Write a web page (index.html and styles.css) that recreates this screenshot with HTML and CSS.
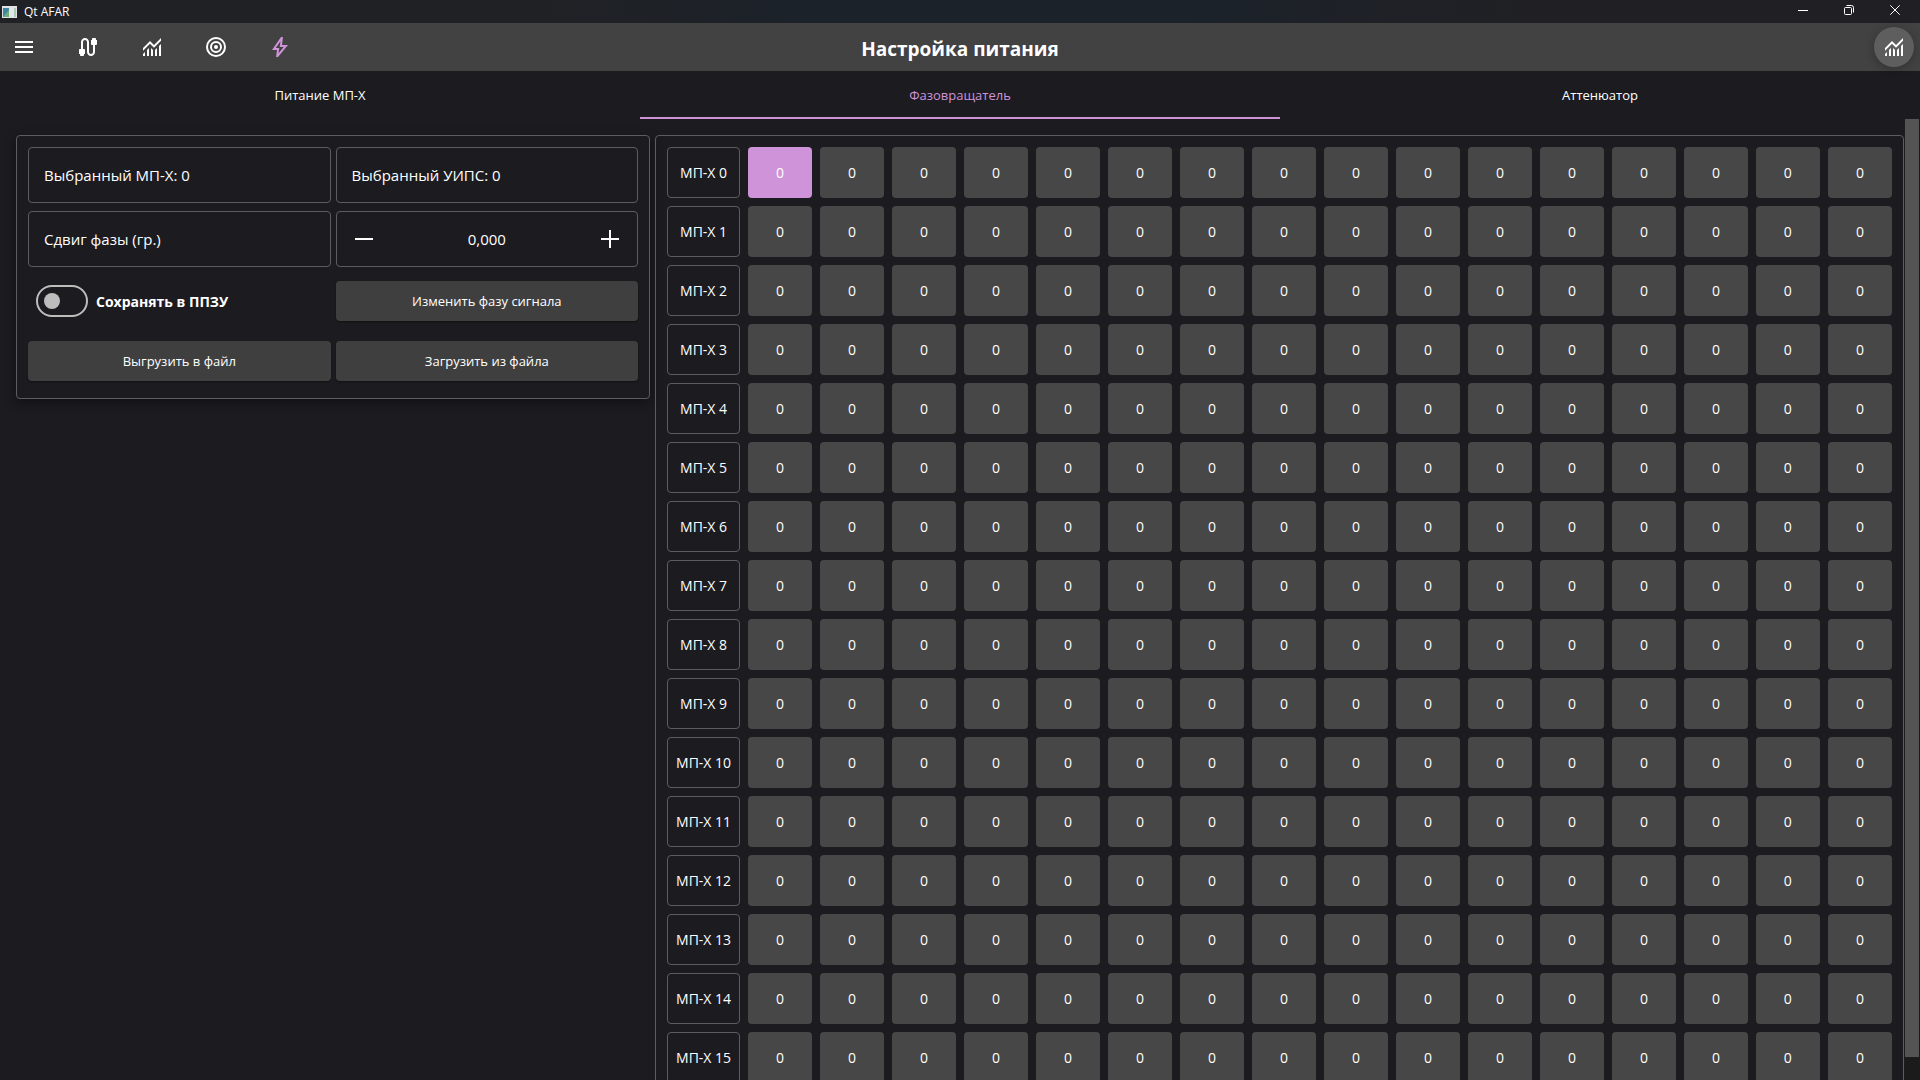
FILE: index.html
```html
<!DOCTYPE html>
<html lang="ru">
<head>
<meta charset="utf-8">
<title>Qt AFAR</title>
<link rel="stylesheet" href="styles.css">
</head>
<body>
<svg class="sprite" aria-hidden="true">
  <symbol id="i-chart" viewBox="0 -960 960 960"><path d="M120-120v-80l80-80v160h-80Zm160 0v-240l80-80v320h-80Zm160 0v-320l80 81v239h-80Zm160 0v-239l80-80v319h-80Zm160 0v-400l80-80v480h-80ZM120-327v-113l280-280 160 160 280-280v113L560-447 400-607 120-327Z"/></symbol>
</svg>
<header class="titlebar">
  <svg class="app-icon" viewBox="0 0 15 12" aria-hidden="true"><rect width="15" height="12" fill="#dfe3e6"/><rect x="1" y="2" width="6" height="9" fill="#3f86a0"/><path d="M1 11L7 4v7z" fill="#6fae7c"/><rect x="8" y="2" width="4" height="9" fill="#e4e6e8"/><rect x="12" y="2" width="2" height="9" fill="#a9cdb4"/></svg>
  <span class="app-name">Qt AFAR</span>
  <div class="window-controls">
    <button aria-label="Свернуть"><svg viewBox="0 0 10 10"><path d="M0 5.500h10"/></svg></button>
    <button aria-label="Восстановить"><svg viewBox="0 0 10 10"><rect x=".5" y="2.500" width="7" height="7" rx="1"/><path d="M2.500 .5h5q2 0 2 2v5"/></svg></button>
    <button aria-label="Закрыть"><svg viewBox="0 0 10 10"><path d="M.3 .3l9.400 9.400M9.700 .3L.3 9.700"/></svg></button>
  </div>
</header>
<div class="toolbar">
  <nav class="tools">
    <button class="tool" aria-label="Меню"><svg viewBox="0 0 24 24"><path d="M3 18h18v-2H3v2zm0-5h18v-2H3v2zm0-7v2h18V6H3z"/></svg></button>
    <button class="tool" aria-label="Подключение"><svg viewBox="0 0 24 24"><path d="M20 5V4c0-.55-.45-1-1-1h-2c-.55 0-1 .45-1 1v1h-1v4c0 .55.45 1 1 1h1v7c0 1.100-.9 2-2 2s-2-.9-2-2V7c0-2.210-1.790-4-4-4S5 4.790 5 7v7H4c-.55 0-1 .45-1 1v4h1v1c0 .55.45 1 1 1h2c.55 0 1-.45 1-1v-1h1v-4c0-.55-.45-1-1-1H7V7c0-1.100.9-2 2-2s2 .9 2 2v10c0 2.210 1.790 4 4 4s4-1.790 4-4v-7h1c.55 0 1-.45 1-1V5h-1z"/></svg></button>
    <button class="tool" aria-label="Графики"><svg><use href="#i-chart"/></svg></button>
    <button class="tool" aria-label="Цель"><svg viewBox="0 0 24 24"><g fill="none" stroke="currentColor" stroke-width="2"><circle cx="12" cy="12" r="9"/><circle cx="12" cy="12" r="5"/></g><circle cx="12" cy="12" r="2"/></svg></button>
    <button class="tool tool-active" aria-label="Питание"><svg viewBox="0 -960 960 960"><path d="m422-232 207-248H469l29-227-185 267h139l-30 208ZM320-80l40-280H160l360-520h80l-40 320h240L400-80h-80Z"/></svg></button>
  </nav>
  <h1>Настройка питания</h1>
  <button class="fab" aria-label="Показать графики"><svg><use href="#i-chart"/></svg></button>
</div>
<div class="tabs" role="tablist">
  <button role="tab">Питание МП-Х</button>
  <button role="tab" aria-selected="true">Фазовращатель</button>
  <button role="tab">Аттенюатор</button>
</div>
<div class="view">
  <main class="content">
    <section class="panel controls">
      <div class="field">Выбранный МП-Х: 0</div>
      <div class="field">Выбранный УИПС: 0</div>
      <label class="field" for="phase">Сдвиг фазы (гр.)</label>
      <div class="field spinner">
        <button aria-label="Уменьшить"><svg viewBox="0 0 18 18"><path d="M0 9h18"/></svg></button>
        <input id="phase" type="text" value="0,000">
        <button aria-label="Увеличить"><svg viewBox="0 0 18 18"><path d="M0 9h18M9 0v18"/></svg></button>
      </div>
      <label class="switch"><input type="checkbox"><span>Сохранять в ППЗУ</span></label>
      <button class="action">Изменить фазу сигнала</button>
      <button class="action">Выгрузить в файл</button>
      <button class="action">Загрузить из файла</button>
    </section>
    <section class="panel matrix">
      <table><tbody id="cells"></tbody></table>
    </section>
  </main>
  <div class="scroll-track"><div class="scroll-thumb"></div></div>
</div>
<script src="script.js"></script>
</body>
</html>
```
FILE: styles.css
```css
* { box-sizing: border-box; }

body {
  margin: 0;
  height: 100vh;
  display: flex;
  flex-direction: column;
  overflow: hidden;
  background: #1c1b1f;
  color: #fff;
  font: 14px/20px "Open Sans", "Noto Sans", sans-serif;
}

button, input {
  margin: 0;
  padding: 0;
  border: 0;
  background: none;
  color: inherit;
  font: inherit;
}

.sprite { display: none; }

.titlebar {
  flex: none;
  height: 23px;
  display: flex;
  align-items: center;
  padding: 0 2px;
  background: linear-gradient(90deg, #202124 25%, #1b222a 45%, #1b222a 60%, #202024 80%);
  font-size: 12px;
}
.app-icon { width: 15px; height: 12px; }
.app-name { margin-left: 7px; }
.window-controls { display: flex; align-self: flex-start; margin-left: auto; }
.window-controls button {
  width: 46px;
  height: 20px;
  display: grid;
  place-items: center;
}
.window-controls svg {
  width: 10px;
  height: 10px;
  fill: none;
  stroke: #fff;
}

.toolbar {
  flex: none;
  height: 48px;
  display: grid;
  grid-template-columns: 1fr auto 1fr;
  align-items: center;
  background: #424242;
}
.tools { display: flex; gap: 16px; }
.tool, .fab { display: grid; place-items: center; }
.tool { width: 48px; height: 48px; }
.tool svg, .fab svg { width: 24px; height: 24px; fill: currentColor; }
.tool-active { color: #ce93d8; }
.toolbar h1 { margin: 0; padding-top: 3px; font-size: 19px; line-height: 28px; }
.fab {
  justify-self: end;
  width: 40px;
  height: 40px;
  margin-right: 6px;
  border-radius: 50%;
  background: #5e5e5e;
  box-shadow: 0 2px 10px #00000044;
}

.tabs { flex: none; display: grid; grid-template-columns: repeat(3, 1fr); }
.tabs button {
  height: 48px;
  border: solid transparent;
  border-width: 2px 0;
  font-size: 13px;
}
.tabs [aria-selected="true"] { color: #ce93d8; border-bottom-color: #ce93d8; }

.view { flex: 1; min-height: 0; display: flex; }
.content {
  flex: 1;
  display: flex;
  align-items: flex-start;
  gap: 5px;
  padding: 16px 1px 8px 16px;
  overflow: hidden;
}
.panel { border: 1px solid #5d5c61; border-radius: 4px; }

.controls {
  flex: 1;
  display: grid;
  grid-template-columns: repeat(2, minmax(0, 1fr));
  gap: 8px 5px;
  padding: 11px;
  box-shadow: 0 4px 12px #00000066;
}
.field {
  height: 56px;
  display: flex;
  align-items: center;
  padding: 0 15px;
  border: 1px solid #5d5c61;
  border-radius: 4px;
  font-size: 15px;
}
.spinner { padding: 0; }
.spinner button { width: 54px; height: 54px; display: grid; place-items: center; }
.spinner svg { width: 18px; height: 18px; stroke: #fff; stroke-width: 2; }
.spinner input { flex: 1; min-width: 0; text-align: center; }

.switch {
  display: flex;
  align-items: center;
  gap: 8px;
  padding-left: 8px;
  font-weight: 700;
}
.switch span { padding-top: 2px; }
.switch input {
  appearance: none;
  width: 52px;
  height: 32px;
  padding: 6px;
  border: 2px solid #bdbdbd;
  border-radius: 16px;
}
.switch input::before {
  content: "";
  display: block;
  width: 16px;
  height: 16px;
  border-radius: 50%;
  background: #bdbdbd;
}
.switch input:checked::before { margin-left: auto; }

.action {
  height: 40px;
  margin: 6px 0;
  border-radius: 4px;
  background: #3f3f40;
  box-shadow: 0 1px 2px #00000066;
  font-size: 13px;
}

.matrix { flex: 0 0 66.15%; padding: 3px; }
.matrix table {
  width: 100%;
  table-layout: fixed;
  border-spacing: 8px;
}
.matrix th, .matrix td { height: 51px; padding: 0; }
.matrix th {
  width: 73px;
  border: 1px solid #5d5c61;
  border-radius: 4px;
  font-weight: 400;
}
.matrix button {
  display: block;
  width: 100%;
  height: 51px;
  border-radius: 4px;
  background: #474748;
}
.matrix [aria-pressed="true"] { background: #ce93d8; }

.scroll-track { flex: none; width: 15px; padding-right: 1px; background: #1b1b1b; }
.scroll-thumb { height: 97.6%; background: #545454; }
```
FILE: script.js
```js
const SIZE = 16;
const body = document.getElementById("cells");

for (let r = 0; r < SIZE; r++) {
  const row = body.insertRow();
  const head = document.createElement("th");
  head.scope = "row";
  head.textContent = "МП-Х " + r;
  row.append(head);
  for (let c = 0; c < SIZE; c++) {
    const button = document.createElement("button");
    button.textContent = "0";
    button.setAttribute("aria-pressed", String(r === 0 && c === 0));
    row.insertCell().append(button);
  }
}
```
